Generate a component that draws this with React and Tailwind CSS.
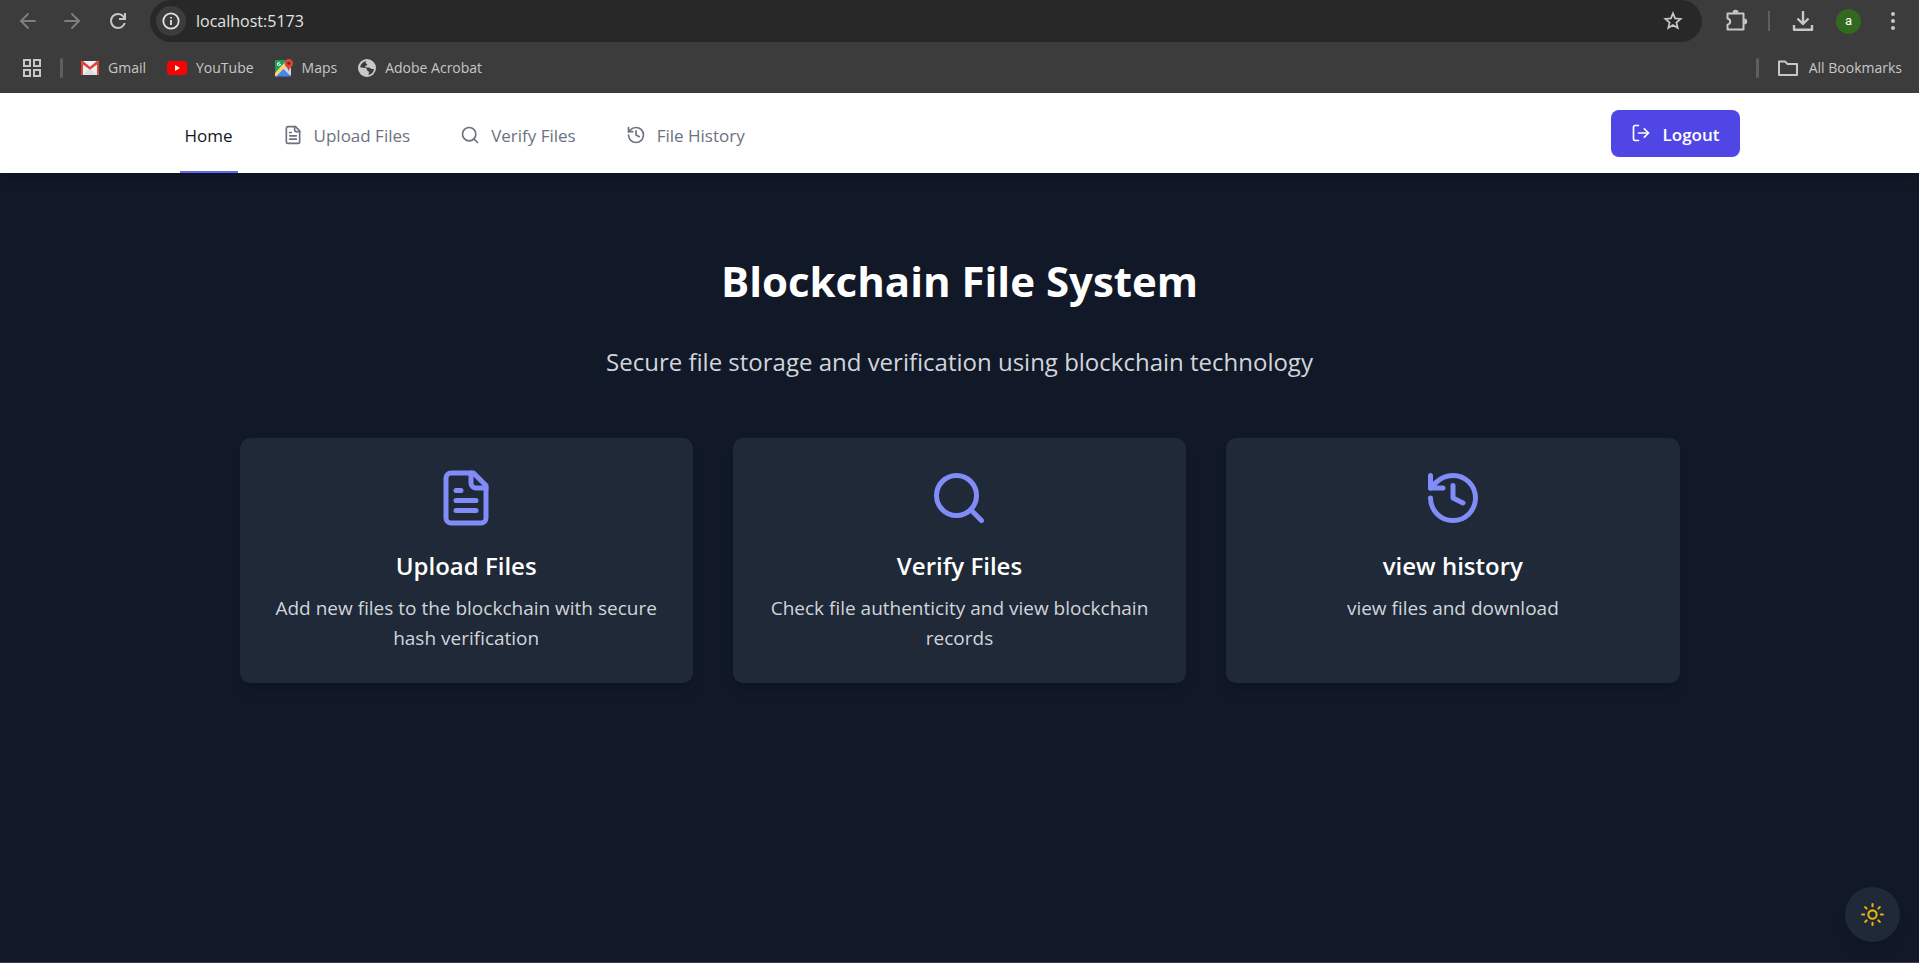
import { ArrowLeft, ArrowRight, LogOut } from "lucide-react";

const stroke = {
  fill: "none",
  stroke: "currentColor",
  strokeLinecap: "round",
  strokeLinejoin: "round",
  strokeWidth: 2,
  viewBox: "0 0 24 24",
  "aria-hidden": true,
};

function FileIcon({ className }) {
  return (
    <svg {...stroke} className={className}>
      <path d="M15 2H6a2 2 0 0 0-2 2v16a2 2 0 0 0 2 2h12a2 2 0 0 0 2-2V7z" />
      <path d="M14 2v4a2 2 0 0 0 2 2h4" />
      <path d="M10 9H8M16 13H8M16 17H8" />
    </svg>
  );
}

function SearchIcon({ className }) {
  return (
    <svg {...stroke} className={className}>
      <circle cx="11" cy="11" r="8" />
      <path d="m21 21-4.3-4.3" />
    </svg>
  );
}

function HistoryIcon({ className }) {
  return (
    <svg {...stroke} className={className}>
      <path d="M3 12a9 9 0 1 0 9-9 9.75 9.75 0 0 0-6.74 2.74L3 8" />
      <path d="M3 3v5h5" />
      <path d="M12 7v5l4 2" />
    </svg>
  );
}

function SunIcon({ className }) {
  return (
    <svg {...stroke} className={className}>
      <circle cx="12" cy="12" r="4" />
      <path d="M12 2v2M12 20v2M4.93 4.93l1.41 1.41M17.66 17.66l1.41 1.41M2 12h2M20 12h2M6.34 17.66l-1.41 1.41M19.07 4.93l-1.41 1.41" />
    </svg>
  );
}

function ReloadIcon() {
  return (
    <svg viewBox="0 0 24 24" className="size-6" fill="currentColor" aria-hidden="true">
      <path d="M12 20q-3.35 0-5.675-2.325T4 12t2.325-5.675T12 4q1.725 0 3.3.713T18 6.75V4h2v7h-7V9h4.2q-.8-1.4-2.187-2.2T12 6Q9.500 6 7.750 7.750T6 12t1.750 4.250T12 18q1.925 0 3.475-1.100T17.650 14h2.100q-.7 2.650-2.850 4.325T12 20" />
    </svg>
  );
}

function GmailLogo() {
  return (
    <svg viewBox="0 0 18 14" className="h-[14px] w-[18px]" aria-hidden="true">
      <rect width="18" height="14" rx="1" fill="#eceff1" />
      <path d="M2 14 9 7l7 7z" fill="#dcdfe2" />
      <path d="M0 1.200V13a1 1 0 0 0 1 1h1V3.400l7 5.400 7-5.400V14h1a1 1 0 0 0 1-1V1.200C18 .4 17.400 0 16.700 0H16L9 5.800 2 0h-.7C.600 0 0 .4 0 1.200z" fill="#db4437" />
    </svg>
  );
}

function YouTubeLogo() {
  return (
    <svg viewBox="0 0 20 14" className="h-[14px] w-5" aria-hidden="true">
      <rect width="20" height="14" rx="3.500" fill="#f00" />
      <path d="M8 4v6l5-3z" fill="#fff" />
    </svg>
  );
}

function MapsLogo() {
  return (
    <svg viewBox="0 0 18 18" className="size-[18px]" aria-hidden="true">
      <path d="M1.500 1.500h14.500v15H1.500z" fill="#d5d8db" />
      <path d="M0 2a1 1 0 0 1 1-1h11L0 14z" fill="#1e9e57" />
      <path d="M0 14 11 3v4L2 17.500H1a1 1 0 0 1-1-1z" fill="#fdd663" />
      <path d="M1 17.500 8.500 10l7.500 7.500z" fill="#4285f4" />
      <path d="M6 5H4.300v1h.7a1.100 1.100 0 1 1-.2-1.500l.7-.7A2 2 0 1 0 6 5z" fill="#fff" />
      <path d="M13.800 0A4.200 4.200 0 0 0 9.600 4.200c0 3 3.200 4 4.200 8.300 1-4.300 4.200-5.300 4.200-8.300A4.200 4.200 0 0 0 13.800 0z" fill="#db4437" />
      <circle cx="13.800" cy="4.200" r="1.500" fill="#7b231b" />
    </svg>
  );
}

function GlobeIcon() {
  return (
    <svg viewBox="0 0 18 18" className="size-[18px]" aria-hidden="true">
      <circle cx="9" cy="9" r="9" fill="#c7cacd" />
      <path d="M9.500 2C7 2.500 7 4 8.500 4.800c1.500.7.5 1.700-.7 2-1.300.4-.8 1.700.7 1.700h2.500c1.300 0 1.500 1.500 2.500 1.500H16c-.3 3-2.500 5.500-5.500 6 0-1.500.8-2 .3-3.200-.5-1-2-.8-2-2.300 0-1.200-1-1.500-2.300-1.500L2.200 8.200C2.500 5 5.500 2 9.500 2z" fill="#3c3c3c" />
    </svg>
  );
}

const bookmarks = [
  { label: "Gmail", href: "#gmail", Logo: GmailLogo },
  { label: "YouTube", href: "#youtube", Logo: YouTubeLogo },
  { label: "Maps", href: "#maps", Logo: MapsLogo },
  { label: "Adobe Acrobat", href: "#acrobat", Logo: GlobeIcon },
];

function BrowserBar() {
  return (
    <header className="bg-[#3c3c3c] text-[#c7c7c7]">
      <div className="flex h-[42px] items-center pr-[14px] pl-4">
        <button type="button" aria-label="Back" className="text-[#7f7f7f]">
          <ArrowLeft className="size-6" strokeWidth={1.8} />
        </button>
        <button type="button" aria-label="Forward" className="ml-5 text-[#7f7f7f]">
          <ArrowRight className="size-6" strokeWidth={1.8} />
        </button>
        <button type="button" aria-label="Reload" className="ml-[22px]">
          <ReloadIcon />
        </button>
        <div className="ml-5 flex h-full flex-1 items-center rounded-full bg-[#282828] pr-[18px] pl-[6px]">
          <button
            type="button"
            aria-label="Site information"
            className="flex size-[30px] items-center justify-center rounded-full bg-[#3c3c3c] text-[#e3e3e3]"
          >
            <svg viewBox="0 0 18 18" className="size-[18px]" fill="none" stroke="currentColor" strokeWidth="1.800" aria-hidden="true">
              <circle cx="9" cy="9" r="7.700" />
              <path d="M9 8v5M9 5v1.600" />
            </svg>
          </button>
          <input
            type="text"
            aria-label="Address"
            defaultValue="localhost:5173"
            className="ml-2.5 min-w-0 flex-1 bg-transparent text-base text-[#e3e3e3] outline-none"
          />
          <button type="button" aria-label="Bookmark this page">
            <svg viewBox="0 0 24 24" className="size-[22px]" fill="none" stroke="currentColor" strokeWidth="1.900" aria-hidden="true">
              <path d="m12 3.600 2.300 5.600 6 .5-4.600 3.900 1.400 5.900L12 16.400l-5.100 3.100 1.400-5.900-4.600-3.900 6-.5z" />
            </svg>
          </button>
        </div>
        <button type="button" aria-label="Extensions" className="ml-[22px]">
          <svg viewBox="0 0 24 24" className="size-6" fill="none" stroke="currentColor" strokeWidth="2" strokeLinejoin="round" aria-hidden="true">
            <path d="M3.500 4.500h16v16h-16v-4.700c3.600-.8 3.600-5.600 0-6.400z" />
            <path d="M9.500 3.800a2 2 0 0 1 4 0M20.200 10.500a2 2 0 0 1 0 4" fill="currentColor" />
          </svg>
        </button>
        <span className="ml-5 h-5 w-[2px] bg-[#5e5e5e]" />
        <button type="button" aria-label="Downloads" className="ml-[22px]">
          <svg viewBox="0 0 22 22" className="size-[22px]" fill="none" stroke="currentColor" strokeWidth="2.400" strokeLinejoin="round" aria-hidden="true">
            <path d="M11 1v12.500M5.500 8.500l5.500 5.500 5.500-5.500" />
            <path d="M2 15v4.800h18V15" />
          </svg>
        </button>
        <button
          type="button"
          aria-label="Profile"
          className="ml-[22px] flex size-[25px] items-center justify-center rounded-full bg-[#33691e] font-[Roboto] text-[13px] text-white"
        >
          a
        </button>
        <button type="button" aria-label="Browser menu" className="ml-5">
          <svg viewBox="0 0 24 24" className="size-6" fill="currentColor" aria-hidden="true">
            <circle cx="12" cy="5" r="2" />
            <circle cx="12" cy="12" r="2" />
            <circle cx="12" cy="19" r="2" />
          </svg>
        </button>
      </div>
      <nav aria-label="Bookmarks" className="flex h-[51px] items-center pr-[17px] pl-[23px] text-sm">
        <button type="button" aria-label="Apps">
          <svg viewBox="0 0 18 18" className="size-[18px]" fill="none" stroke="currentColor" strokeWidth="2" aria-hidden="true">
            <path d="M1 1h6v6H1zM11 1h6v6h-6zM1 11h6v6H1zM11 11h6v6h-6z" />
          </svg>
        </button>
        <span className="ml-[19px] h-5 w-[3px] rounded-full bg-[#5e5e5e]" />
        <div className="ml-[18px] flex items-center gap-[21px]">
          {bookmarks.map(({ label, href, Logo }) => (
            <a key={label} href={href} className="flex items-center gap-[9px]">
              <Logo />
              {label}
            </a>
          ))}
        </div>
        <span className="ml-auto h-5 w-[3px] rounded-full bg-[#5e5e5e]" />
        <button type="button" className="ml-[18px] flex items-center gap-2.5">
          <svg viewBox="0 0 22 18" className="h-[18px] w-[22px]" fill="none" stroke="currentColor" strokeWidth="2" strokeLinejoin="round" aria-hidden="true">
            <path d="M2 2.500h6l2.500 2.500H20v11H2z" />
          </svg>
          All Bookmarks
        </button>
      </nav>
    </header>
  );
}

const links = [
  { label: "Upload Files", href: "#upload", Icon: FileIcon },
  { label: "Verify Files", href: "#verify", Icon: SearchIcon },
  { label: "File History", href: "#history", Icon: HistoryIcon },
];

function NavBar() {
  return (
    <nav aria-label="Main" className="bg-white shadow-lg">
      <div className="mx-auto flex h-20 max-w-[1600px] items-stretch px-5">
        <div className="flex gap-10 text-[17px] font-medium">
          <a
            href="#home"
            aria-current="page"
            className="flex items-center border-b-2 border-[#6366f1] px-[5px] pt-2 text-gray-900"
          >
            Home
          </a>
          {links.map(({ label, href, Icon }) => (
            <a
              key={label}
              href={href}
              className="flex items-center border-b-2 border-transparent px-[5px] pt-2 text-[#6b7280]"
            >
              <Icon className="mr-[11px] mb-0.5 size-5" />
              {label}
            </a>
          ))}
        </div>
        <button
          type="button"
          className="mt-[17px] ml-auto flex h-[47px] items-center rounded-lg bg-[#4f46e5] px-5 pt-0.5 text-[17px] font-semibold text-white"
        >
          <LogOut className="mr-3 mb-1 size-5" />
          Logout
        </button>
      </div>
    </nav>
  );
}

const cards = [
  {
    title: "Upload Files",
    text: "Add new files to the blockchain with secure hash verification",
    href: "#upload",
    Icon: FileIcon,
  },
  {
    title: "Verify Files",
    text: "Check file authenticity and view blockchain records",
    href: "#verify",
    Icon: SearchIcon,
  },
  {
    title: "view history",
    text: "view files and download",
    href: "#history",
    Icon: HistoryIcon,
  },
];

export default function App() {
  return (
    <div className="flex min-h-screen flex-col border-b border-[#3c3c3c] bg-[#111827] font-['Open_Sans','Noto_Sans',sans-serif]">
      <BrowserBar />
      <NavBar />
      <main className="mx-auto w-full max-w-[1600px] flex-1 px-20 pt-20 text-center">
        <h1 className="text-[42px] leading-[56px] font-bold text-white">Blockchain File System</h1>
        <p className="mt-[35px] text-2xl leading-9 text-[#d1d5db]">
          Secure file storage and verification using blockchain technology
        </p>
        <div className="mt-[58px] grid grid-cols-3 gap-10">
          {cards.map(({ title, text, href, Icon }) => (
            <a
              key={title}
              href={href}
              className="flex flex-col items-center rounded-[10px] bg-[#1f2937] p-[30px] shadow-lg"
            >
              <Icon className="size-[60px] text-[#818cf8]" />
              <h2 className="mt-5 text-2xl leading-[35px] font-semibold text-white">{title}</h2>
              <p className="mt-2.5 text-[19px] leading-[30px] text-[#d1d5db]">{text}</p>
            </a>
          ))}
        </div>
      </main>
      <button
        type="button"
        aria-label="Switch to light theme"
        className="fixed right-[19px] bottom-[21px] flex size-[55px] items-center justify-center rounded-full bg-[#1f2937] text-[#eab308] shadow-lg"
      >
        <SunIcon className="size-[25px]" />
      </button>
    </div>
  );
}
